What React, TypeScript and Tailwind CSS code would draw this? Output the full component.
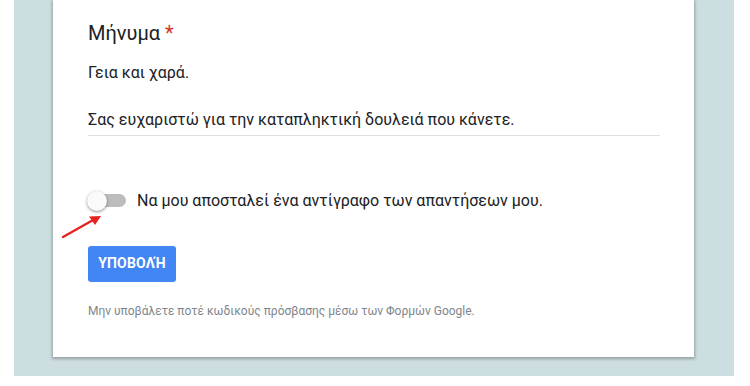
import React from "react";

export default function App() {
  const font = { fontFamily: "Roboto, 'Noto Sans', Arial, sans-serif" };
  return (
    <div className="w-[750px] h-[386px] bg-white overflow-hidden relative" style={font}>
      <div className="ml-[14px] w-[720px] h-[376px] bg-[#cddee1] pt-0">
        <div className="ml-[39px] w-[641px] h-[357px] bg-white shadow-[0_1px_3px_1px_rgba(0,0,0,0.28)] pl-[35px] pt-[21px] relative">
          <div className="text-[20px] leading-[24px] text-[#202124] flex items-start">
            <span>Μήνυμα</span>
            <span className="text-[#d93025] ml-[5px]">*</span>
          </div>
          <div className="mt-[16px] w-[572px] text-[16px] leading-[23.5px] text-[#202124] pb-[3px] border-b border-[#e0e0e0]">
            <div>Γεια και χαρά.</div>
            <div className="h-[23.5px]"></div>
            <div>Σας ευχαριστώ για την καταπληκτική δουλειά που κάνετε.</div>
          </div>
          <div className="mt-[53px] flex items-center h-[24px]">
            <div className="relative w-[38px] h-[20px] flex items-center">
              <div className="absolute left-[8px] w-[30px] h-[13px] rounded-full bg-[#bdbdbd]"></div>
              <div className="absolute -left-[1px] w-[20px] h-[20px] rounded-full bg-[#fafafa] shadow-[0_1px_3px_rgba(0,0,0,0.45)]"></div>
            </div>
            <span className="ml-[11px] text-[16px] text-[#202124] leading-[24px]">
              Να μου αποσταλεί ένα αντίγραφο των απαντήσεων μου.
            </span>
          </div>
          <button className="mt-[33px] w-[88px] h-[36px] rounded-[3px] bg-[#4285f4] text-white text-[14px] font-bold tracking-[0.2px] flex items-center justify-center">
            ΥΠΟΒΟΛΉ
          </button>
          <div className="mt-[21px] text-[12px] leading-[16px] text-[#80868b]">
            Μην υποβάλετε ποτέ κωδικούς πρόσβασης μέσω των Φορμών Google.
          </div>
        </div>
      </div>
      <svg className="absolute left-0 top-0" width="750" height="386">
        <line x1="63" y1="237" x2="94" y2="219.5" stroke="#e8231f" strokeWidth="2.4" strokeLinecap="round" />
        <polygon points="101,216 89,216.5 95,225" fill="#e8231f" />
      </svg>
    </div>
  );
}
